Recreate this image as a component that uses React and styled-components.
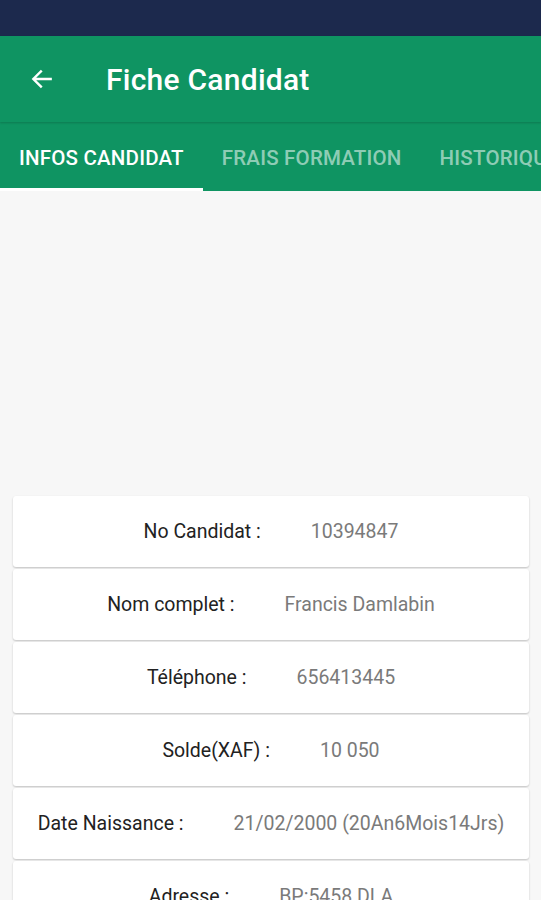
import React from "react";
import styled, { createGlobalStyle } from "styled-components";

const GlobalStyle = createGlobalStyle`
  html, body {
    margin: 0;
    padding: 0;
    background: #f7f7f7;
    font-family: Roboto, "Noto Sans", "Liberation Sans", sans-serif;
  }
`;

const Screen = styled.div`
  width: 541px;
  height: 900px;
  overflow: hidden;
  background: #f7f7f7;
  display: flex;
  flex-direction: column;
`;

const StatusBar = styled.div`
  height: 36px;
  background: #1c294d;
  flex-shrink: 0;
`;

const AppBar = styled.div`
  height: 86px;
  background: #0f9462;
  display: flex;
  align-items: center;
  padding-left: 29px;
  gap: 51px;
  flex-shrink: 0;
  box-shadow: 0 1px 2px rgba(0, 0, 0, 0.18);
  position: relative;
  z-index: 1;
`;

const BackButton = styled.button`
  background: none;
  border: none;
  padding: 0;
  display: flex;
  cursor: pointer;
`;

const Title = styled.h1`
  margin: 0;
  color: #fff;
  font-size: 30px;
  font-weight: 500;
  letter-spacing: 0.25px;
`;

const TabBar = styled.div`
  height: 69px;
  background: #0f9462;
  display: flex;
  flex-shrink: 0;
  white-space: nowrap;
`;

const Tab = styled.div`
  position: relative;
  padding: 3px 19px 0;
  display: flex;
  align-items: center;
  color: ${(p) => (p.active ? "#ffffff" : "rgba(255,255,255,0.55)")};
  font-size: 20.5px;
  font-weight: 500;
  letter-spacing: 0.2px;
  flex-shrink: 0;

  &::after {
    content: "";
    position: absolute;
    left: 0;
    right: 0;
    bottom: 0;
    height: 3px;
    background: ${(p) => (p.active ? "#ffffff" : "transparent")};
  }
`;

const Photo = styled.div`
  height: 305px;
  flex-shrink: 0;
`;

const List = styled.div`
  display: flex;
  flex-direction: column;
  gap: 2px;
  padding: 0 12px 0 13px;
`;

const Card = styled.div`
  height: 71px;
  background: #fff;
  border-radius: 3px;
  box-shadow: 0 1px 2px rgba(0, 0, 0, 0.22);
  display: flex;
  align-items: center;
  justify-content: center;
  gap: 50px;
  font-size: 19.5px;
  flex-shrink: 0;
`;

const Label = styled.span`
  color: #222;
`;

const Value = styled.span`
  color: #7a7a7a;
`;

const rows = [
  ["No Candidat :", "10394847"],
  ["Nom complet :", "Francis Damlabin"],
  ["Téléphone :", "656413445"],
  ["Solde(XAF) :", "10 050"],
  ["Date Naissance :", "21/02/2000 (20An6Mois14Jrs)"],
  ["Adresse :", "BP:5458 DLA"],
];

const tabs = ["INFOS CANDIDAT", "FRAIS FORMATION", "HISTORIQUE"];

export default function App() {
  return (
    <>
      <GlobalStyle />
      <Screen>
        <StatusBar />
        <AppBar>
          <BackButton>
            <svg width="26" height="26" viewBox="0 0 24 24" fill="none">
              <path
                d="M20 12H4.5M11 5l-7 7 7 7"
                stroke="#fff"
                strokeWidth="2.2"
                strokeLinecap="square"
              />
            </svg>
          </BackButton>
          <Title>Fiche Candidat</Title>
        </AppBar>
        <TabBar>
          {tabs.map((t, i) => (
            <Tab key={t} active={i === 0}>
              {t}
            </Tab>
          ))}
        </TabBar>
        <Photo />
        <List>
          {rows.map(([label, value]) => (
            <Card key={label}>
              <Label>{label}</Label>
              <Value>{value}</Value>
            </Card>
          ))}
        </List>
      </Screen>
    </>
  );
}
